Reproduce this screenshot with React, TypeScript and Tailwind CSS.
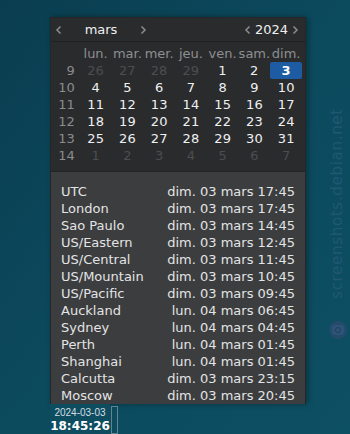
import React from 'react';

const WEEKDAYS = ['lun.', 'mar.', 'mer.', 'jeu.', 'ven.', 'sam.', 'dim.'];

const WEEKS: { num: number; days: { d: number; other?: boolean }[] }[] = [
  { num: 9, days: [{ d: 26, other: true }, { d: 27, other: true }, { d: 28, other: true }, { d: 29, other: true }, { d: 1 }, { d: 2 }, { d: 3 }] },
  { num: 10, days: [4, 5, 6, 7, 8, 9, 10].map((d) => ({ d })) },
  { num: 11, days: [11, 12, 13, 14, 15, 16, 17].map((d) => ({ d })) },
  { num: 12, days: [18, 19, 20, 21, 22, 23, 24].map((d) => ({ d })) },
  { num: 13, days: [25, 26, 27, 28, 29, 30, 31].map((d) => ({ d })) },
  { num: 14, days: [1, 2, 3, 4, 5, 6, 7].map((d) => ({ d, other: true })) },
];

const ZONES = [
  ['UTC', 'dim. 03 mars 17:45'],
  ['London', 'dim. 03 mars 17:45'],
  ['Sao Paulo', 'dim. 03 mars 14:45'],
  ['US/Eastern', 'dim. 03 mars 12:45'],
  ['US/Central', 'dim. 03 mars 11:45'],
  ['US/Mountain', 'dim. 03 mars 10:45'],
  ['US/Pacific', 'dim. 03 mars 09:45'],
  ['Auckland', 'lun. 04 mars 06:45'],
  ['Sydney', 'lun. 04 mars 04:45'],
  ['Perth', 'lun. 04 mars 01:45'],
  ['Shanghai', 'lun. 04 mars 01:45'],
  ['Calcutta', 'dim. 03 mars 23:15'],
  ['Moscow', 'dim. 03 mars 20:45'],
];

function Chevron({ dir }: { dir: 'l' | 'r' }) {
  return (
    <svg width="8" height="10" viewBox="0 0 8 10" className="text-[#8a8c8e]">
      <path d={dir === 'l' ? 'M5.5 1.5 L2 5 L5.5 8.5' : 'M2.5 1.5 L6 5 L2.5 8.5'} fill="none" stroke="currentColor" strokeWidth="1.5" />
    </svg>
  );
}

export default function App() {
  return (
    <div
      className="relative w-[350px] h-[434px] overflow-hidden flex flex-col bg-gradient-to-br from-[#0a3d4f] via-[#0c4a5e] to-[#0d4f63] text-[13px] leading-[17px]"
      style={{ fontFamily: '"DejaVu Sans", sans-serif' }}
    >
      <div className="absolute left-[322px] top-[96px] w-[30px] h-[214px] flex items-center justify-center pointer-events-none">
        <div className="-rotate-90 whitespace-nowrap text-[15px] text-[#215773] tracking-[0.7px]">screenshots.debian.net</div>
      </div>
      <div className="absolute left-[329px] top-[321px] w-[18px] h-[18px] rounded-full bg-[#254a6c] flex items-center justify-center pointer-events-none">
        <div className="w-[12px] h-[10px] rounded-[3px] bg-[#2d5476] flex items-center justify-center">
          <div className="w-[6px] h-[6px] rounded-full border-[1.5px] border-[#1b3f5e]" />
        </div>
      </div>

      <div className="h-[17px] shrink-0" />

      <div className="ml-[50px] w-[256px] shrink-0 border-l border-t border-r border-[#252628] shadow-[2px_0_6px_rgba(0,0,0,0.35)]">
        <div className="bg-[#2a2b2d]">
          <div className="h-[24px] flex items-center border-b border-[#202123] pl-[2px] pr-[4px] text-[#eff0f1]">
            <div className="w-[12px] flex justify-center"><Chevron dir="l" /></div>
            <div className="w-[72px] text-center">mars</div>
            <div className="w-[12px] flex justify-center"><Chevron dir="r" /></div>
            <div className="flex-1" />
            <div className="w-[12px] flex justify-center"><Chevron dir="l" /></div>
            <div className="px-[1px]">2024</div>
            <div className="w-[12px] flex justify-center"><Chevron dir="r" /></div>
          </div>

          <div className="pt-[3px] pb-[7px] pr-[3px]">
            <div className="flex h-[17px]">
              <div className="w-[29px]" />
              {WEEKDAYS.map((w) => (
                <div key={w} className="w-[32px] text-center text-[#8d8f91]">{w}</div>
              ))}
            </div>
            {WEEKS.map((wk) => (
              <div key={wk.num} className="flex h-[17px]">
                <div className="w-[24px] text-right text-[#8a8c8e]">{wk.num}</div>
                <div className="w-[5px]" />
                {wk.days.map((day, i) => {
                  const sel = !day.other && day.d === 3 && wk.num === 9;
                  return (
                    <div key={i} className="w-[32px] flex justify-center">
                      {sel ? (
                        <div className="w-[32px] h-[17px] rounded-[2px] bg-[#1d5ba3] text-white font-bold text-center">{day.d}</div>
                      ) : (
                        <div className={day.other ? 'text-[#4c4e50]' : 'text-[#eff0f1]'}>{day.d}</div>
                      )}
                    </div>
                  );
                })}
              </div>
            ))}
          </div>
        </div>

        <div className="bg-[#3b3d3e] pt-[11px] px-[10px] border-t border-[#232425]">
          {ZONES.map(([name, time]) => (
            <div key={name} className="flex justify-between h-[17px] text-[#e3e4e5]">
              <span>{name}</span>
              <span>{time}</span>
            </div>
          ))}
        </div>
      </div>

      <div className="flex-1 flex">
        <div className="w-[50px]" />
        <div className="w-[60px] flex flex-col items-center justify-center bg-[#0e4d60] pt-[1px]">
          <div className="text-[10px] leading-[13px] text-[#d4dde0]" style={{ fontFamily: '"Liberation Sans", sans-serif' }}>2024-03-03</div>
          <div className="text-[12px] leading-[14px] font-bold text-white" style={{ fontFamily: '"DejaVu Sans", sans-serif' }}>18:45:26</div>
        </div>
        <div className="mt-[2px] ml-[1px] w-[7px] h-[28px] border border-[#5f8593]" />
      </div>
    </div>
  );
}
